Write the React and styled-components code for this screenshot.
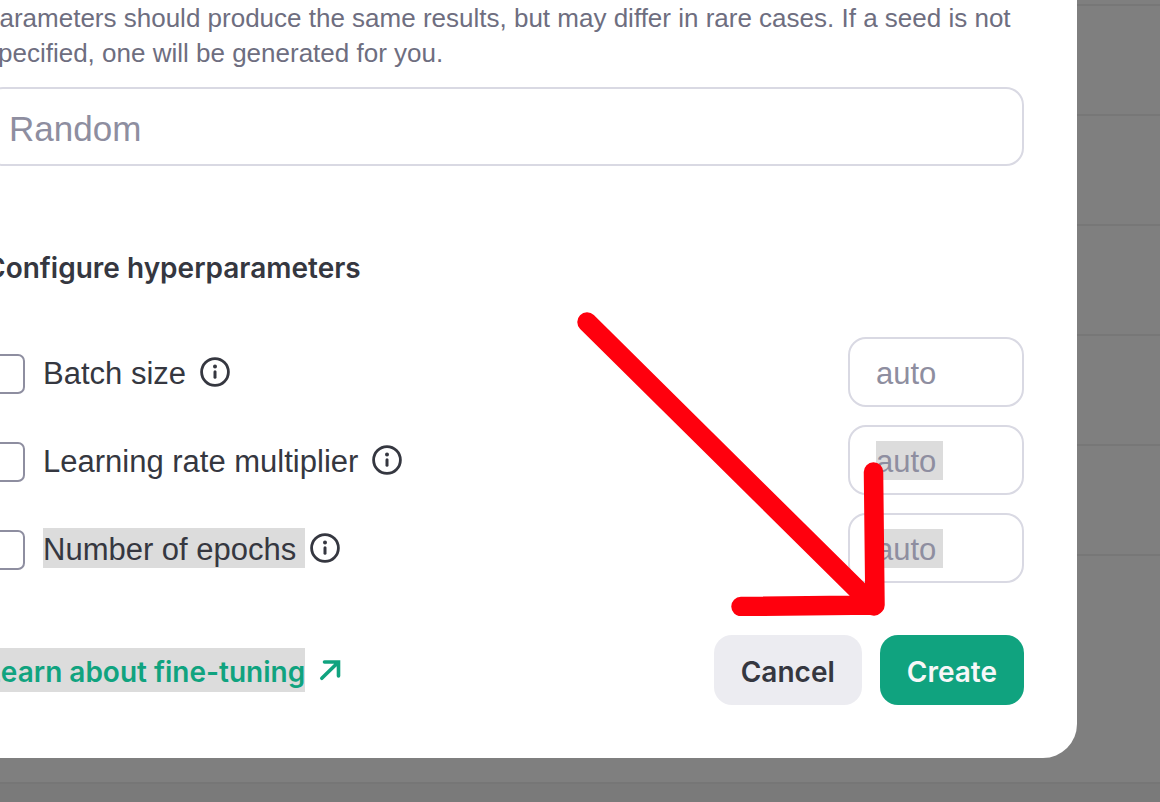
import React, { useState } from "react";
import styled, { createGlobalStyle } from "styled-components";

const hyperparameters = [
  { id: "batch-size", label: "Batch size" },
  { id: "learning-rate", label: "Learning rate multiplier", valueMarked: true },
  { id: "epochs", label: "Number of epochs", marked: true, valueMarked: true }
];

const InfoIcon = () => (
  <svg width="30" height="30" viewBox="0 0 30 30" aria-hidden="true">
    <circle cx="15" cy="15" r="13.4" fill="none" stroke="#353740" strokeWidth="2.8" />
    <circle cx="15" cy="9.6" r="2" fill="#353740" />
    <path d="M15 14.8v5.4" stroke="#353740" strokeWidth="3" strokeLinecap="round" />
  </svg>
);

const ExternalIcon = () => (
  <svg width="22" height="22" viewBox="0 0 22 22" aria-hidden="true">
    <path
      d="M5.500 3H19.500V17M19 3.500L2.800 19.300"
      fill="none"
      stroke="#10a37f"
      strokeWidth="3.6"
      strokeLinecap="round"
      strokeLinejoin="miter"
    />
  </svg>
);

const HyperparameterRow = ({ item }) => {
  const [enabled, setEnabled] = useState(false);
  const [value, setValue] = useState("");

  return (
    <Row>
      <Checkbox
        type="checkbox"
        id={item.id}
        checked={enabled}
        onChange={e => setEnabled(e.target.checked)}
      />
      <RowLabel htmlFor={item.id}>
        <Mark $on={item.marked}>{item.label} </Mark>
      </RowLabel>
      <InfoIcon />
      <ValueInput
        type="text"
        placeholder="auto"
        aria-label={item.label}
        value={value}
        onChange={e => setValue(e.target.value)}
        $marked={item.valueMarked}
      />
    </Row>
  );
};

const App = () => (
  <Page>
    <GlobalStyle />
    <Backdrop aria-hidden="true">
      <JobList>
        <JobRow $first />
        <JobRow />
        <JobRow />
        <JobRow />
        <JobRow />
        <JobRow />
      </JobList>
    </Backdrop>
    <Dialog role="dialog" aria-label="Create a fine-tuned model">
      <Description id="seed-help">
        parameters should produce the same results, but may differ in rare
        cases. If a seed is not
        <br />
        specified, one will be generated for you.
      </Description>
      <SeedInput
        type="text"
        placeholder="Random"
        aria-label="Seed"
        aria-describedby="seed-help"
      />
      <Heading>Configure hyperparameters</Heading>
      <Rows>
        {hyperparameters.map(item => (
          <HyperparameterRow key={item.id} item={item} />
        ))}
      </Rows>
      <Footer>
        <LearnLink href="#fine-tuning">
          <LinkText>Learn about fine-tuning</LinkText>
          <ExternalIcon />
        </LearnLink>
        <Button type="button">Cancel</Button>
        <Button type="button" $primary>
          Create
        </Button>
      </Footer>
      <Arrow width="308" height="304" viewBox="0 0 308 304" aria-hidden="true">
        <path
          d="M10 10L297 294M164 294.5L298 293L296.500 160"
          fill="none"
          stroke="#ff000d"
          strokeWidth="19.5"
          strokeLinecap="round"
          strokeLinejoin="round"
        />
      </Arrow>
    </Dialog>
  </Page>
);

const GlobalStyle = createGlobalStyle`
  *, *::before, *::after {
    box-sizing: border-box;
  }

  body {
    margin: 0;
    background-color: #7a7a7a;
    color: #353740;
    font-family: "Liberation Sans", Arial, sans-serif;
    font-size: 31px;
    line-height: 36px;
  }

  input, button {
    font: inherit;
    color: inherit;
  }
`;

const Page = styled.main`
  display: grid;
  min-height: 100vh;
  overflow: hidden;
`;

const Backdrop = styled.div`
  grid-area: 1 / 1;
  display: flex;
  margin: 0 -16px;
  padding-bottom: 18px;
`;

const JobList = styled.div`
  flex: 1;
  border: 2px solid #767676;
  border-top: 0;
  border-radius: 0 0 16px 16px;
  background-color: #7f7f7f;
`;

const JobRow = styled.div`
  height: ${props => (props.$first ? "6px" : "110px")};
  border-bottom: 2px solid #777777;
`;

const Dialog = styled.section`
  grid-area: 1 / 1;
  position: relative;
  display: flex;
  flex-direction: column;
  margin: 0 83px 44px -68px;
  padding: 1px 53px 53px;
  border-radius: 0 0 34px 0;
  background-color: #ffffff;
`;

const Description = styled.p`
  margin: 0 0 16px;
  color: #6e6e80;
  font-size: 26px;
  line-height: 35px;
  white-space: nowrap;
`;

const SeedInput = styled.input`
  height: 79px;
  padding: 4px 22px 0;
  border: 2px solid #d9d9e3;
  border-radius: 18px;
  background-color: #ffffff;
  font-size: 35px;

  &::placeholder {
    color: #8e8ea0;
    opacity: 1;
  }
`;

const Heading = styled.h2`
  margin: 84px 0 51px;
  font-family: Inter, sans-serif;
  font-size: 28px;
  font-weight: 600;
`;

const Rows = styled.div`
  display: flex;
  flex-direction: column;
  gap: 18px;
`;

const Row = styled.div`
  display: flex;
  align-items: center;
  height: 70px;
`;

const Checkbox = styled.input`
  appearance: none;
  flex: none;
  width: 40px;
  height: 40px;
  margin: 4px 18px 0 0;
  border: 2px solid #8e8ea0;
  border-radius: 7px;
  background-color: #ffffff;

  &:checked {
    background-color: #10a37f;
  }
`;

const RowLabel = styled.label`
  margin-right: 5px;
  white-space: pre;
`;

const Mark = styled.span`
  display: block;
  padding-top: 4px;
  background-color: ${props => (props.$on ? "#dcdcdc" : "transparent")};
`;

const ValueInput = styled.input`
  width: 176px;
  height: 70px;
  margin-left: auto;
  padding: 4px 26px 0;
  border: 2px solid #d9d9e3;
  border-radius: 18px;
  background: ${props =>
    props.$marked
      ? "linear-gradient(#dcdcdc, #dcdcdc) 26px center / 67px 39px no-repeat #ffffff"
      : "#ffffff"};

  &::placeholder {
    color: #8e8ea0;
    opacity: 1;
  }
`;

const Footer = styled.footer`
  display: flex;
  align-items: center;
  gap: 18px;
  margin-top: 52px;
`;

const LearnLink = styled.a`
  display: flex;
  align-items: center;
  gap: 14px;
  margin-right: auto;
  color: #10a37f;
  font-family: Inter, sans-serif;
  font-size: 28px;
  font-weight: 600;
  text-decoration: none;
`;

const LinkText = styled.span`
  padding-top: 4px;
  line-height: 40px;
  background-color: #dcdcdc;
`;

const Button = styled.button`
  height: 70px;
  padding: 4px 27px 0;
  border: 0;
  border-radius: 18px;
  background-color: ${props => (props.$primary ? "#10a37f" : "#ececf1")};
  color: ${props => (props.$primary ? "#f7f7f8" : "#353740")};
  font-family: Inter, sans-serif;
  font-size: 28px;
  font-weight: 600;
`;

const Arrow = styled.svg`
  position: absolute;
  right: 192px;
  bottom: 142px;
  pointer-events: none;
`;

export default App;
